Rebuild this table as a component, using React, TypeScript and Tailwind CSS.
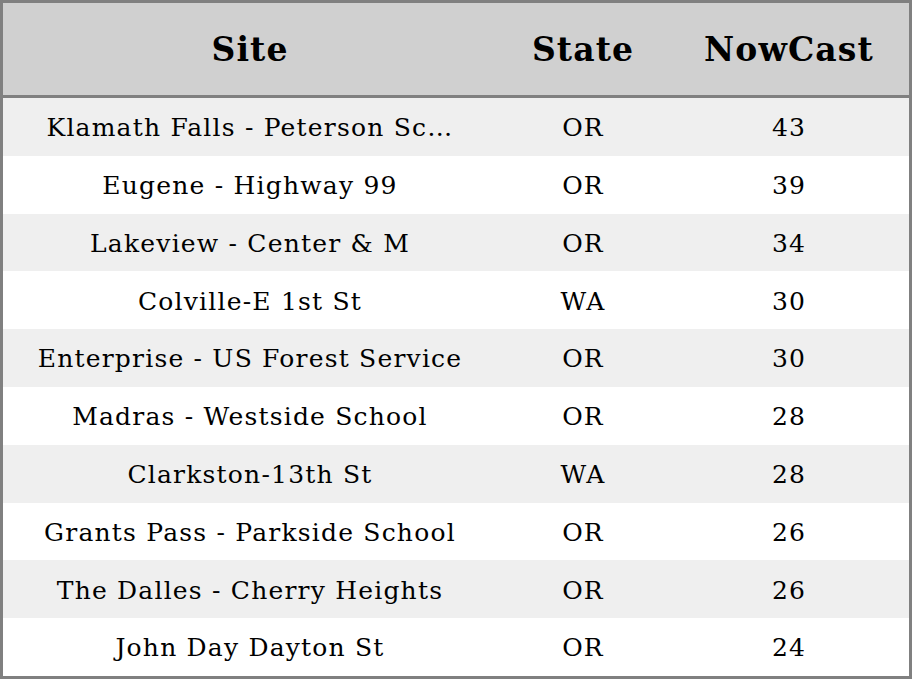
const rows: { site: string; state: string; nowcast: number }[] = [
  { site: "Klamath Falls - Peterson Sc…", state: "OR", nowcast: 43 },
  { site: "Eugene - Highway 99", state: "OR", nowcast: 39 },
  { site: "Lakeview - Center & M", state: "OR", nowcast: 34 },
  { site: "Colville-E 1st St", state: "WA", nowcast: 30 },
  { site: "Enterprise - US Forest Service", state: "OR", nowcast: 30 },
  { site: "Madras - Westside School", state: "OR", nowcast: 28 },
  { site: "Clarkston-13th St", state: "WA", nowcast: 28 },
  { site: "Grants Pass - Parkside School", state: "OR", nowcast: 26 },
  { site: "The Dalles - Cherry Heights", state: "OR", nowcast: 26 },
  { site: "John Day Dayton St", state: "OR", nowcast: 24 },
]

export default function App() {
  return (
    <div className="w-[912px] h-[679px] border-[3px] border-[#808080] bg-white text-black flex flex-col font-['DejaVu_Serif',serif]">
      <div className="grid grid-cols-[494px_172px_240px] h-[95px] shrink-0 pt-[2px] bg-[#d0d0d0] border-b-[3px] border-[#808080] items-center text-center text-[33px] font-bold tracking-[1.1px]">
        <div>Site</div>
        <div>State</div>
        <div>NowCast</div>
      </div>
      <div className="flex-1 flex flex-col">
        {rows.map((row, i) => (
          <div
            key={i}
            className={`flex-1 grid grid-cols-[494px_172px_240px] items-center text-center text-[25px] tracking-[1.2px] pt-[2px] ${i % 2 === 0 ? 'bg-[#efefef]' : 'bg-white'}`}
          >
            <div className="whitespace-nowrap">{row.site}</div>
            <div>{row.state}</div>
            <div>{row.nowcast}</div>
          </div>
        ))}
      </div>
    </div>
  )
}
